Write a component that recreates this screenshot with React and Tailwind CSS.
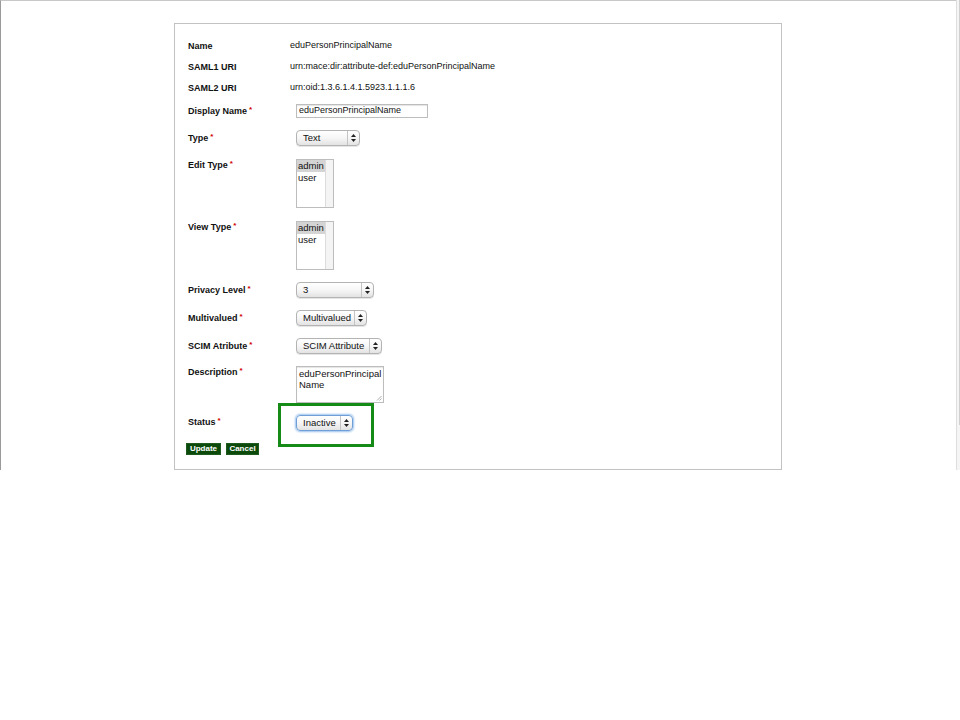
import React from "react";

function Arrows() {
  return (
    <svg width="5" height="8" viewBox="0 0 5 8">
      <path d="M2.5 0 L5 3 L0 3 Z" fill="#222" />
      <path d="M2.5 8 L5 5 L0 5 Z" fill="#222" />
    </svg>
  );
}

function Sel({ className = "", children, focus = false }) {
  return (
    <div
      className={`flex h-[16px] items-stretch rounded-[4px] border text-[9.5px] leading-none text-[#111] bg-gradient-to-b from-white via-[#f6f6f6] to-[#e3e3e3] ${
        focus
          ? "border-[#6f9fd6] shadow-[0_0_2px_1px_#9cc3ee]"
          : "border-[#b3b3b3] shadow-[0_1px_0_#e6e6e6]"
      } ${className}`}
    >
      <div className="flex flex-1 items-center pl-[6px]">{children}</div>
      <div className="flex w-[12px] items-center justify-center border-l border-[#c4c4c4]">
        <Arrows />
      </div>
    </div>
  );
}

function Req() {
  return <span className="relative top-[-1px] ml-[2px] align-top text-[8px] font-bold text-[#d10000]">*</span>;
}

function Label({ children, req, className = "w-[102px]" }) {
  return (
    <div className={`shrink-0 text-[9px] font-bold leading-[12px] text-[#111] ${className}`}>
      {children}
      {req && <Req />}
    </div>
  );
}

function ListBox() {
  return (
    <div className="flex h-[49px] w-[38px] border border-[#bdbdbd] bg-white text-[9.5px] leading-[12px] text-[#111]">
      <div className="flex-1">
        <div className="bg-[#d4d4d4] pl-[1px]">admin</div>
        <div className="pl-[1px]">user</div>
      </div>
      <div className="w-[8px] border-l border-[#dcdcdc] bg-[#f4f4f4]" />
    </div>
  );
}

export default function App() {
  return (
    <div className="h-[720px] w-[960px] bg-white font-['Liberation_Sans',Arial,sans-serif]">
      <div className="flex h-[470px]">
        <div className="flex-1 border-l border-t border-l-[#9a9a9a] border-t-[#c8c8c8]">
          <div className="ml-[173px] mt-[22px] h-[447px] w-[608px] border border-[#c2c2c2] bg-white pl-[13px] pt-[11px]">
            {/* Name */}
            <div className="flex h-[21px] items-center">
              <Label>Name</Label>
              <div className="text-[9px] text-[#111]">eduPersonPrincipalName</div>
            </div>
            <div className="flex h-[21px] items-center">
              <Label>SAML1 URI</Label>
              <div className="text-[9px] text-[#111]">urn:mace:dir:attribute-def:eduPersonPrincipalName</div>
            </div>
            <div className="flex h-[21px] items-center">
              <Label>SAML2 URI</Label>
              <div className="text-[9px] text-[#111]">urn:oid:1.3.6.1.4.1.5923.1.1.1.6</div>
            </div>
            {/* Display Name */}
            <div className="flex h-[25px] items-center">
              <Label req className="w-[108px]">Display Name</Label>
              <div className="flex h-[14px] w-[132px] items-center border border-[#bdbdbd] pl-[2px] text-[9px] text-[#111] shadow-[inset_0_1px_1px_#e4e4e4]">
                eduPersonPrincipalName
              </div>
            </div>
            {/* Type */}
            <div className="flex h-[29px] items-center">
              <Label req className="w-[108px]">Type</Label>
              <Sel className="w-[64px]">Text</Sel>
            </div>
            {/* Edit Type */}
            <div className="flex h-[62px] items-start pt-[7px]">
              <Label req className="w-[108px]">Edit Type</Label>
              <ListBox />
            </div>
            {/* View Type */}
            <div className="flex h-[62px] items-start pt-[7px]">
              <Label req className="w-[108px]">View Type</Label>
              <ListBox />
            </div>
            {/* Privacy Level */}
            <div className="flex h-[27px] items-center">
              <Label req className="w-[108px]">Privacy Level</Label>
              <Sel className="w-[78px]">3</Sel>
            </div>
            <div className="flex h-[29px] items-center">
              <Label req className="w-[108px]">Multivalued</Label>
              <Sel className="w-[71px]">Multivalued</Sel>
            </div>
            <div className="flex h-[27px] items-center">
              <Label req className="w-[108px]">SCIM Atribute</Label>
              <Sel className="w-[86px]">SCIM Attribute</Sel>
            </div>
            {/* Description */}
            <div className="flex h-[44px] items-start pt-[7px]">
              <Label req className="w-[108px]">Description</Label>
              <div className="relative h-[37px] w-[88px] border border-[#bdbdbd] bg-white pl-[2px] pt-[1px] text-[9.5px] leading-[11px] text-[#111] shadow-[inset_0_1px_1px_#e4e4e4]">
                <div>eduPersonPrincipal</div>
                <div>Name</div>
                <svg className="absolute bottom-[1px] right-[1px]" width="6" height="6" viewBox="0 0 6 6">
                  <path d="M5.5 1 L1 5.5 M5.5 3.5 L3.5 5.5" stroke="#999" strokeWidth="0.8" />
                </svg>
              </div>
            </div>
            {/* Status */}
            <div className="flex h-[40px] items-start pt-[12px]">
              <Label req className="mt-[1px] w-[108px]">Status</Label>
              <div className="relative">
                <Sel focus className="w-[57px]">Inactive</Sel>
                <div className="pointer-events-none absolute left-[-18px] top-[-12px] h-[44px] w-[96px] border-[3px] border-[#168a16]" />
              </div>
            </div>
            {/* Buttons */}
            <div className="-ml-[2px] flex gap-[5px]">
              <button className="flex h-[12px] w-[35px] items-center justify-center border border-[#1f5a1f] bg-[#0b4a0b] text-[8px] font-bold leading-none text-white">
                Update
              </button>
              <button className="flex h-[12px] w-[33px] items-center justify-center border border-[#1f5a1f] bg-[#0b4a0b] text-[8px] font-bold leading-none text-white">
                Cancel
              </button>
            </div>
          </div>
        </div>
        <div className="flex w-[4px] border-l border-[#dedede] bg-[#f5f5f5]">
          <div className="ml-auto h-[425px] w-[1px] bg-[#d0d0d0]" />
        </div>
      </div>
    </div>
  );
}
